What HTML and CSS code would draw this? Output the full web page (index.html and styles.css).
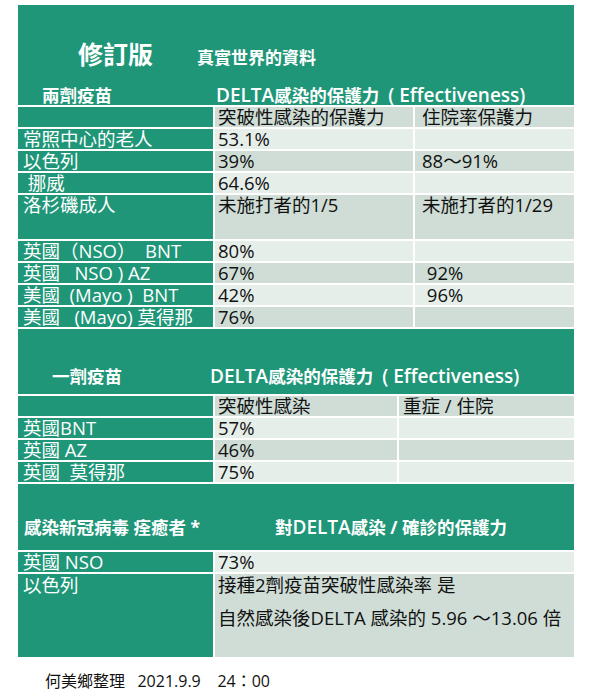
FILE: index.html
```html
<!DOCTYPE html>
<html lang="zh-Hant">
<head>
<meta charset="utf-8">
<title>修訂版 真實世界的資料</title>
<link rel="stylesheet" href="styles.css">
</head>
<body>
<div class="page">
  <div class="sheet">
    <section class="hero green">
      <div class="title"><span class="big">修訂版</span><span class="sub">真實世界的資料</span></div>
      <div class="hrow"><span class="hl">兩劑疫苗</span><span class="hr"><span class="en">DELTA</span>感染的保護力  <span class="en">( Effectiveness)</span></span></div>
    </section>

    <div class="grid g-two">
      <div class="cell lab"></div><div class="cell dk">突破性感染的保護力</div><div class="cell dk c3">住院率保護力</div>
      <div class="cell lab">常照中心的老人</div><div class="cell lt">53.1%</div><div class="cell lt c3"></div>
      <div class="cell lab">以色列</div><div class="cell dk">39%</div><div class="cell dk c3">88～91%</div>
      <div class="cell lab"> 挪威</div><div class="cell lt">64.6%</div><div class="cell lt c3"></div>
      <div class="cell lab tall">洛杉磯成人</div><div class="cell dk tall">未施打者的1/5</div><div class="cell dk c3 tall">未施打者的1/29</div>
      <div class="cell lab">英國（NSO）  BNT</div><div class="cell lt">80%</div><div class="cell lt c3"></div>
      <div class="cell lab">英國   NSO ) AZ</div><div class="cell dk">67%</div><div class="cell dk c3"> 92%</div>
      <div class="cell lab">美國  (Mayo )  BNT</div><div class="cell lt">42%</div><div class="cell lt c3"> 96%</div>
      <div class="cell lab">美國   (Mayo) 莫得那</div><div class="cell dk">76%</div><div class="cell dk c3"></div>
    </div>

    <section class="band band-one green">
      <span class="bl">一劑疫苗</span><span class="br"><span class="en">DELTA</span>感染的保護力  <span class="en">( Effectiveness)</span></span>
    </section>

    <div class="grid g-one">
      <div class="cell lab"></div><div class="cell dk">突破性感染</div><div class="cell dk c3b">重症 / 住院</div>
      <div class="cell lab">英國BNT</div><div class="cell lt">57%</div><div class="cell lt c3b"></div>
      <div class="cell lab">英國 AZ</div><div class="cell dk">46%</div><div class="cell dk c3b"></div>
      <div class="cell lab">英國  莫得那</div><div class="cell lt">75%</div><div class="cell lt c3b"></div>
    </div>

    <section class="band band-nat green">
      <span class="bl">感染新冠病毒 痊癒者 *</span><span class="br">對<span class="en">DELTA</span>感染 / 確診的保護力</span>
    </section>

    <div class="grid g-nat">
      <div class="cell lab">英國 NSO</div><div class="cell lt">73%</div>
      <div class="cell lab last">以色列</div>
      <div class="cell dk last wrap"><div>接種2劑疫苗突破性感染率 是</div><div class="line2">自然感染後DELTA 感染的 5.96 ～13.06 倍</div></div>
    </div>
  </div>
  <p class="footer">何美鄉整理   2021.9.9    24：00</p>
</div>
</body>
</html>
```

FILE: styles.css
```css
* { box-sizing: border-box; }

body {
  margin: 0;
  background: #ffffff;
  font-family: "Open Sans", "Noto Sans CJK TC", sans-serif;
  color: #111111;
}

.page {
  padding: 5px 0 0 18px;
}

.sheet {
  width: 556px;
  display: flex;
  flex-direction: column;
  gap: 2px;
}

.green {
  background: #1f9678;
  color: #ffffff;
}

.hero {
  height: 100px;
  padding-top: 34px;
}

.title {
  display: flex;
  align-items: baseline;
  padding-left: 60px;
  height: 30px;
}

.big {
  font-size: 25px;
  font-weight: 700;
  line-height: 30px;
}

.sub {
  font-size: 17px;
  font-weight: 700;
  margin-left: 44px;
}

.hrow {
  display: grid;
  grid-template-columns: 197px 1fr;
  margin-top: 16px;
  font-size: 17.5px;
  font-weight: 700;
  line-height: 20px;
  white-space: pre;
}

.en {
  font-size: 19px;
  font-weight: 600;
}

.hl { padding-left: 24px; }
.hr { padding-left: 1px; }

.grid {
  display: grid;
  gap: 2px;
  font-size: 18.5px;
  line-height: 20px;
}

.g-two { grid-template-columns: 195px 198px 159px; }
.g-one { grid-template-columns: 195px 182px 175px; }
.g-nat { grid-template-columns: 195px 359px; }

.cell {
  height: 20px;
  padding-left: 3px;
  white-space: pre;
}

.wrap { white-space: normal; }

.lab {
  background: #1f9678;
  color: #ffffff;
  padding-left: 5px;
}

.lt { background: #e6eeea; }
.dk { background: #cfddd6; }

.c3 { padding-left: 7px; }
.c3b { padding-left: 4px; }

.tall { height: 44px; }

.band {
  height: 65px;
  display: grid;
  font-size: 17.5px;
  font-weight: 700;
  line-height: 20px;
  white-space: pre;
}

.band-one {
  grid-template-columns: 192px 1fr;
  padding-top: 37px;
}

.band-one .bl { padding-left: 34px; }

.band-nat {
  height: 66px;
  grid-template-columns: 257px 1fr;
  padding-top: 33px;
}

.band-nat .bl { padding-left: 6px; }

.last {
  height: 83px;
  padding-top: 1px;
}

.line2 {
  margin-top: 13px;
}

.footer {
  margin: 14px 0 0 27px;
  font-size: 16px;
  line-height: 20px;
  white-space: pre;
}
```
